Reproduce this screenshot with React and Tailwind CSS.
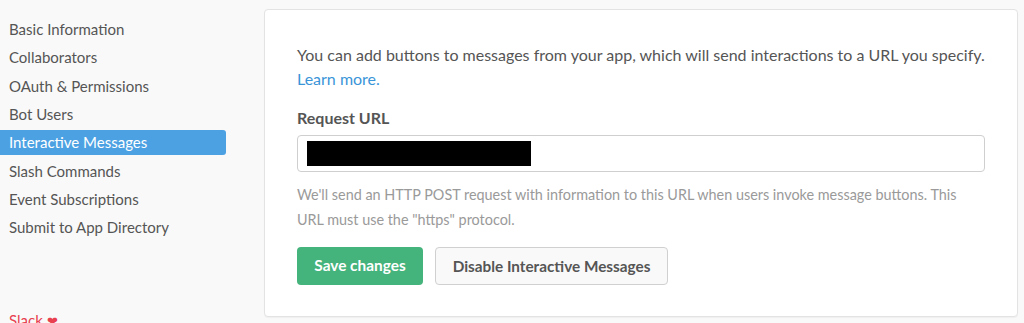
export default function App() {
  const items = [
    "Basic Information",
    "Collaborators",
    "OAuth & Permissions",
    "Bot Users",
    "Interactive Messages",
    "Slash Commands",
    "Event Subscriptions",
    "Submit to App Directory",
  ];
  const active = "Interactive Messages";

  return (
    <div className="flex h-[323px] w-[1024px] overflow-hidden bg-[#f9f9f9] font-['Lato','Liberation_Sans',sans-serif]">
      {/* sidebar */}
      <div className="flex w-[226px] shrink-0 flex-col">
        <nav className="flex flex-col gap-[3.4px] pt-[16.5px]">
          {items.map((it) => (
            <div
              key={it}
              className={`flex h-[25px] items-center rounded-r-[3px] pl-[9px] text-[15px] ${
                it === active ? "bg-[#4ca1e3] text-white" : "text-[#555]"
              }`}
            >
              {it}
            </div>
          ))}
        </nav>
        <div className="mt-auto pl-[9px] text-[15px] leading-[20px] text-[#e8404f] translate-y-[8px]">
          Slack <span className="text-[13px]">❤</span>
        </div>
      </div>

      {/* main card */}
      <div className="ml-[38px] mr-[6px] mt-[9px] h-[308px] flex-1 rounded-[4px] border border-[#e3e3e3] bg-white px-8 pt-[33px] shadow-[0_1px_1px_rgba(0,0,0,0.04)]">
        <p className="text-[16px] leading-[24px] text-[#555]">
          You can add buttons to messages from your app, which will send interactions to a URL you specify.
          <br />
          <a className="text-[#3a95d8]">Learn more.</a>
        </p>

        <div className="mt-[16px] text-[16px] font-bold leading-[22px] text-[#555]">Request URL</div>

        <div className="mt-[6px] flex h-[37px] items-center rounded-[4px] border border-[#cfcfcf] bg-white px-[9px]">
          <div className="h-[25px] w-[224px] bg-black" />
        </div>

        <p className="mt-[10px] text-[14.4px] leading-[25px] text-[#9a9a9a]">
          We'll send an HTTP POST request with information to this URL when users invoke message buttons. This
          <br />
          URL must use the "https" protocol.
        </p>

        <div className="mt-[15px] flex gap-3">
          <button className="h-[38px] w-[126px] rounded-[4px] bg-[#45b37c] text-[15.4px] font-bold text-white">
            Save changes
          </button>
          <button className="h-[38px] w-[233px] rounded-[4px] border border-[#d0d0d0] bg-[#f9f9f9] text-[15.3px] font-bold text-[#555]">
            Disable Interactive Messages
          </button>
        </div>
      </div>
    </div>
  );
}
